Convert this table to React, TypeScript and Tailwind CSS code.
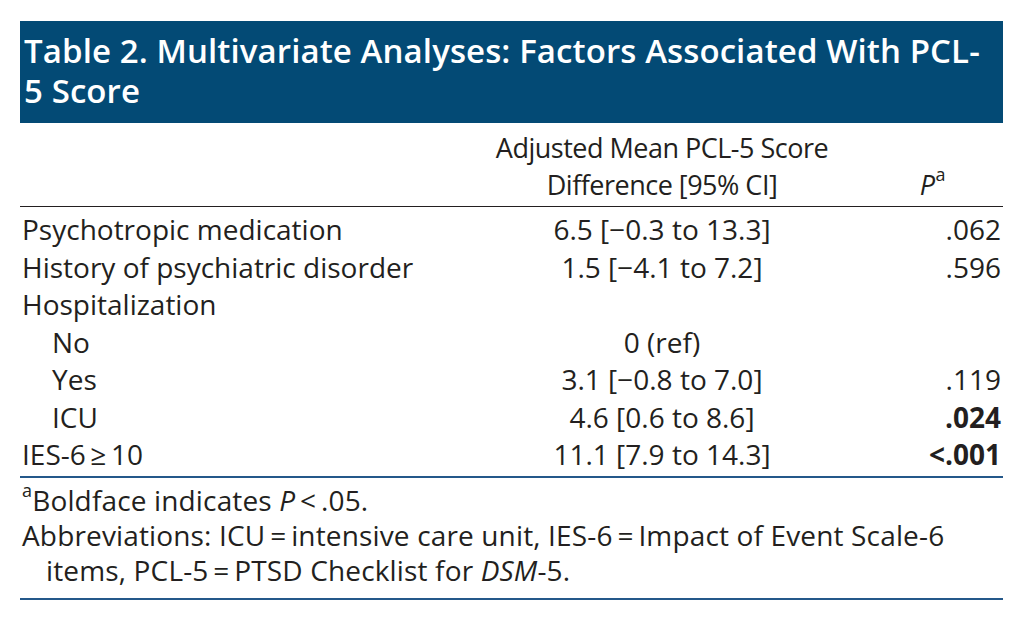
const rows = [
  { label: 'Psychotropic medication', ci: '6.5 [\u22120.3 to 13.3]', p: '.062', indent: false, bold: false },
  { label: 'History of psychiatric disorder', ci: '1.5 [\u22124.1 to 7.2]', p: '.596', indent: false, bold: false },
  { label: 'Hospitalization', ci: '', p: '', indent: false, bold: false },
  { label: 'No', ci: '0 (ref)', p: '', indent: true, bold: false },
  { label: 'Yes', ci: '3.1 [\u22120.8 to 7.0]', p: '.119', indent: true, bold: false },
  { label: 'ICU', ci: '4.6 [0.6 to 8.6]', p: '.024', indent: true, bold: true },
  { label: 'IES-6\u2009\u2265\u200910', ci: '11.1 [7.9 to 14.3]', p: '<.001', indent: false, bold: true },
];

export default function App() {
  return (
    <div className="w-[1031px] h-[628px] bg-white pt-[21px] px-[20px] text-[#231f20] font-['Open_Sans',sans-serif]">
      <div className="w-[983px]">
        {/* title band */}
        <div className="bg-[#034a75] h-[102px] px-[4px] pt-[10px] text-white text-[33px] font-semibold leading-[40px] tracking-[0.1px]">
          Table 2. Multivariate Analyses: Factors Associated With PCL-
          <br />
          5 Score
        </div>

        {/* column headings */}
        <div className="grid grid-cols-[450px_384px_149px] text-[27px] leading-[37px] tracking-[-0.5px] pt-[6px] pb-[3px] border-b border-[#231f20]">
          <div />
          <div className="text-center">
            Adjusted Mean PCL-5 Score
            <br />
            Difference [95% CI]
          </div>
          <div className="flex items-end justify-end pr-[58px]">
            <span>
              <i>P</i>
              <sup className="text-[18px] align-[5px] ml-[1px]">a</sup>
            </span>
          </div>
        </div>

        {/* body */}
        <div className="pt-[4px] pb-[2px] text-[28px] leading-[37.5px] border-b-2 border-[#24588a]">
          {rows.map((r) => (
            <div key={r.label} className="grid grid-cols-[450px_384px_149px]">
              <div className={r.indent ? 'pl-[32px]' : 'pl-[2px]'}>{r.label}</div>
              <div className="text-center">{r.ci}</div>
              <div className={r.bold ? 'text-right font-bold pr-[2px]' : 'text-right pr-[2px]'}>{r.p}</div>
            </div>
          ))}
        </div>

        {/* footnotes */}
        <div className="pt-[5px] pb-[10px] text-[28px] leading-[35px] tracking-[0.15px] border-b-2 border-[#24588a] pl-[2px]">
          <div>
            <sup className="text-[18px] align-[5px]">a</sup>Boldface indicates <i>P</i>{'\u2009<\u2009.05.'}
          </div>
          <div className="pl-[24px] -indent-[24px]">
            Abbreviations: ICU{'\u2009=\u2009'}intensive care unit, IES-6{'\u2009=\u2009'}Impact of Event Scale-6
            <br />
            items, PCL-5{'\u2009=\u2009'}PTSD Checklist for <i>DSM</i>-5.
          </div>
        </div>
      </div>
    </div>
  );
}
